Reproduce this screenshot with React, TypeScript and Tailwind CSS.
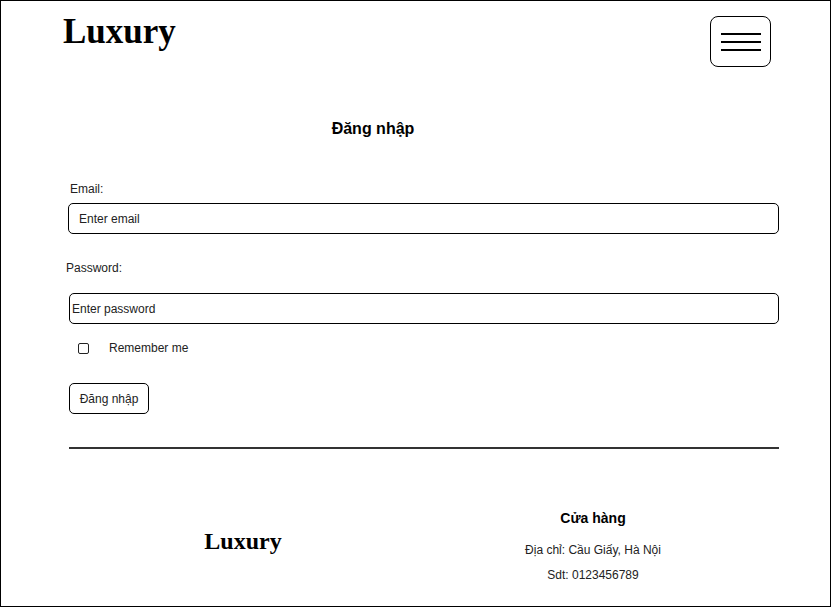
import React from "react";

// Top bar with brand and menu toggle
function Header() {
  return (
    <div className="flex h-[66px] items-start justify-between">
      <div
        className="ml-[62px] pt-[13px] text-[35px] font-bold leading-none text-black"
        style={{ fontFamily: '"Liberation Serif", "Times New Roman", serif' }}
      >
        Luxury
      </div>
      <button
        type="button"
        className="mr-[59px] mt-[15px] flex h-[51px] w-[61px] flex-col items-center justify-center gap-[6px] rounded-[8px] border border-black bg-white"
      >
        <span className="block h-[2px] w-[40px] bg-black" />
        <span className="block h-[2px] w-[40px] bg-black" />
        <span className="block h-[2px] w-[40px] bg-black" />
      </button>
    </div>
  );
}

function LoginForm() {
  return (
    <div className="ml-[67px] w-[711px]">
      <div className="mt-[42px] pl-[2px] text-[12px] leading-[16px] text-[#222]">
        Email:
      </div>
      <input
        type="email"
        placeholder="Enter email"
        className="mt-[6px] block h-[31px] w-[711px] rounded-[5px] border border-black pl-[10px] text-[12px] text-[#222] outline-none placeholder:text-[#222]"
      />

      <div className="-ml-[2px] mt-[26px] text-[12px] leading-[16px] text-[#222]">
        Password:
      </div>
      <input
        type="password"
        placeholder="Enter password"
        className="ml-[1px] mt-[17px] block h-[31px] w-[710px] rounded-[5px] border border-black pl-[2px] text-[12px] text-[#222] outline-none placeholder:text-[#222]"
      />

      <label className="mt-[19px] flex h-[11px] items-center">
        <input
          type="checkbox"
          className="ml-[10px] h-[11px] w-[11px] appearance-none rounded-[2px] border border-[#222] bg-white"
        />
        <span className="-mt-[1px] ml-[20px] text-[12px] leading-[16px] text-[#222]">
          Remember me
        </span>
      </label>

      <button
        type="button"
        className="ml-[1px] mt-[29px] block h-[31px] w-[80px] rounded-[5px] border border-black bg-white text-[12px] text-[#222]"
      >
        Đăng nhập
      </button>

      <div className="ml-[1px] mt-[33px] h-[2px] w-[710px] bg-[#333]" />
    </div>
  );
}

function Footer() {
  return (
    <div className="ml-[67px] flex items-start">
      <div className="w-[350px] pt-[80px] text-center">
        <div
          className="text-[24px] font-bold leading-none text-black"
          style={{ fontFamily: '"Liberation Serif", "Times New Roman", serif' }}
        >
          Luxury
        </div>
      </div>
      <div className="w-[350px] pt-[60px] text-center">
        <div className="text-[14px] font-bold leading-[18px] text-black">
          Cửa hàng
        </div>
        <div className="mt-[15px] text-[12px] leading-[16px] text-[#222]">
          Địa chỉ: Cầu Giấy, Hà Nội
        </div>
        <div className="mt-[9px] text-[12px] leading-[16px] text-[#222]">
          Sdt: 0123456789
        </div>
      </div>
    </div>
  );
}

export default function App() {
  return (
    <div
      className="h-[607px] w-[831px] overflow-hidden border border-black bg-white"
      style={{ fontFamily: '"Liberation Sans", Arial, sans-serif' }}
    >
      <Header />
      <div className="ml-[67px] mt-[52px] w-[610px] text-center text-[16px] font-bold leading-[20px] text-black">
        Đăng nhập
      </div>
      <LoginForm />
      <Footer />
    </div>
  );
}
